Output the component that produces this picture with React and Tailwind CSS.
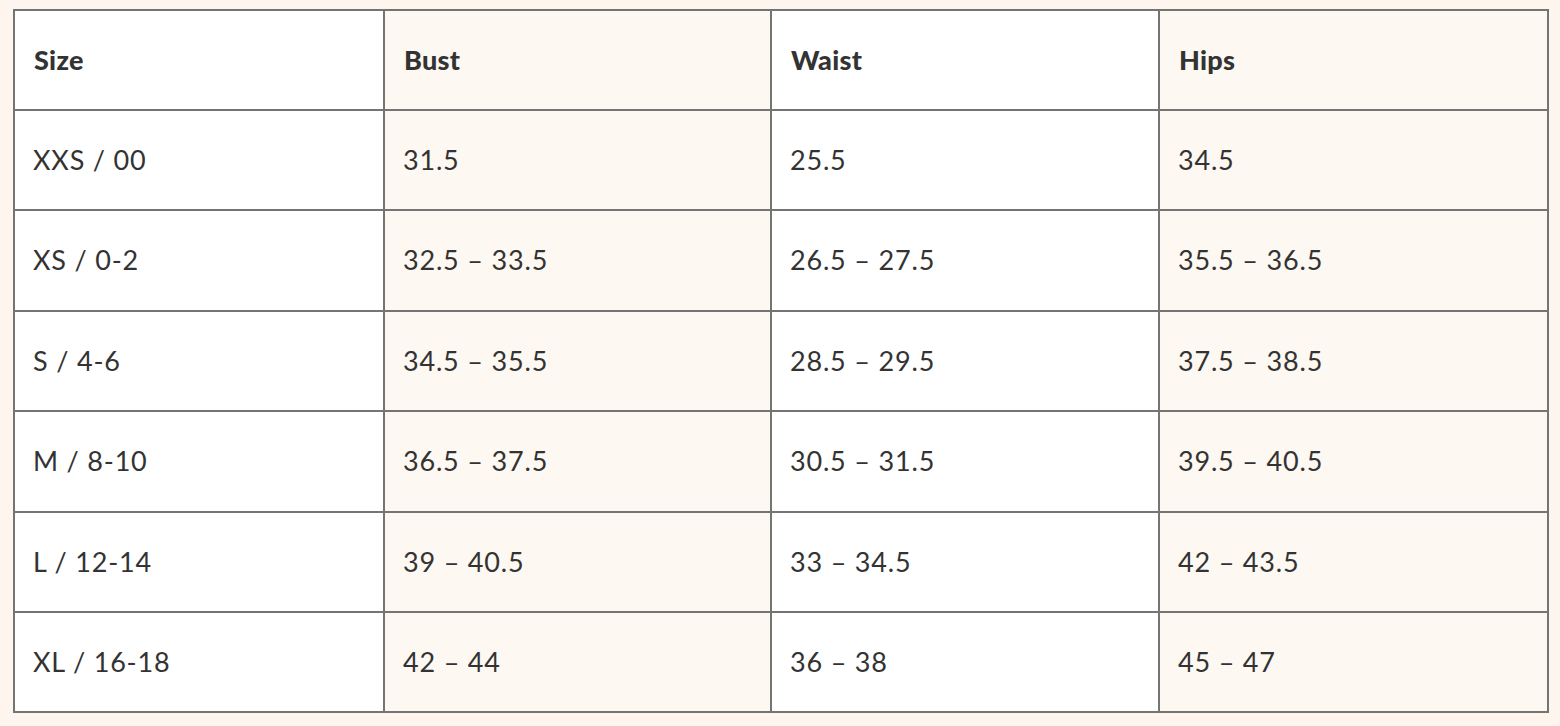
const rows = [
  ['XXS / 00', '31.5', '25.5', '34.5'],
  ['XS / 0-2', '32.5 – 33.5', '26.5 – 27.5', '35.5 – 36.5'],
  ['S / 4-6', '34.5 – 35.5', '28.5 – 29.5', '37.5 – 38.5'],
  ['M / 8-10', '36.5 – 37.5', '30.5 – 31.5', '39.5 – 40.5'],
  ['L / 12-14', '39 – 40.5', '33 – 34.5', '42 – 43.5'],
  ['XL / 16-18', '42 – 44', '36 – 38', '45 – 47'],
]

const headers = ['Size', 'Bust', 'Waist', 'Hips']

function App() {
  return (
    <div className="min-h-[726px] bg-[#fdf5ee] px-[13px] pt-[9px] font-['Lato',sans-serif] text-[#333]">
      <table className="w-[1534px] table-fixed border-collapse border-2 border-[#747474]">
        <colgroup>
          <col className="w-[370px]" />
          <col className="w-[387px]" />
          <col className="w-[388px]" />
          <col className="w-[389px]" />
        </colgroup>
        <thead>
          <tr className="h-[100px]">
            {headers.map((h, i) => (
              <th
                key={h}
                className={`border-2 border-[#747474] pl-[19px] text-left text-[27px] font-black tracking-[0.01em] ${i % 2 ? 'bg-[#fdf8f2]' : 'bg-white'}`}
              >
                {h}
              </th>
            ))}
          </tr>
        </thead>
        <tbody>
          {rows.map((r) => (
            <tr key={r[0]} className="h-[100.4px]">
              {r.map((c, i) => (
                <td
                  key={i}
                  className={`border-2 border-[#747474] pl-[18px] text-[27px] tracking-[0.03em] ${i % 2 ? 'bg-[#fdf8f2]' : 'bg-white'}`}
                >
                  {c}
                </td>
              ))}
            </tr>
          ))}
        </tbody>
      </table>
    </div>
  )
}

export default App
